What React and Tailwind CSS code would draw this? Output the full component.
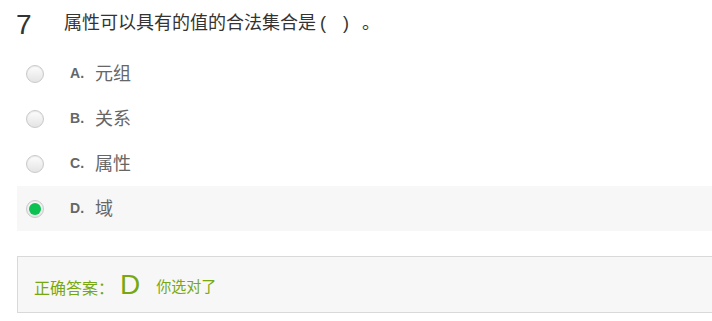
const options = [
  { key: "A", text: "元组" },
  { key: "B", text: "关系" },
  { key: "C", text: "属性" },
  { key: "D", text: "域", checked: true },
]

const Radio = ({ checked }) => (
  <span className="w-[18px] h-[18px] rounded-full border border-[#c9c9c9] bg-gradient-to-b from-[#fdfdfd] to-[#e4e4e4] flex items-center justify-center shadow-[inset_0_1px_1px_rgba(0,0,0,0.08)]">
    {checked && <span className="w-[12px] h-[12px] rounded-full bg-[#0bc152]" />}
  </span>
)

export default function App() {
  return (
    <div className="w-[712px] h-[321px] bg-white overflow-hidden pl-[17px] font-['Noto_Sans_CJK_SC','Noto_Sans',sans-serif]">

      {/* Question */}
      <div className="h-[51px] flex items-center">
        <span className="w-[48px] -ml-[1px] pb-[2px] text-[28px] leading-none text-[#333] font-['Liberation_Sans',Arial,sans-serif]">7</span>
        <span className="text-[18px] text-[#333] pb-[6px]">
          属性可以具有的值的合法集合是
          <span className="ml-[4px] font-['Liberation_Sans',Arial,sans-serif]">(</span>
          <span className="ml-[17px] font-['Liberation_Sans',Arial,sans-serif]">)</span>
          <span className="ml-[13px]">。</span>
        </span>
      </div>

      {/* Options */}
      <ul className="w-[720px]">
        {options.map((o) => (
          <li key={o.key} className={`h-[45px] flex items-center pl-[9px] ${o.checked ? "bg-[#f7f7f7]" : ""}`}>
            <Radio checked={o.checked} />
            <span className="ml-[26px] w-[25px] text-[14px] font-bold text-[#666] font-['Liberation_Sans',Arial,sans-serif]">{o.key}.</span>
            <span className="text-[18px] text-[#666] pb-[2px]">{o.text}</span>
          </li>
        ))}
      </ul>

      {/* Answer */}
      <div className="mt-[25px] w-[720px] h-[57px] border border-[#d9d9d9] bg-[#f7f7f7] flex items-center pl-[16px] pt-[4px] text-[#77a80f]">
        <span className="text-[16px]">正确答案：</span>
        <span className="ml-[6px] mb-[4px] text-[28px] leading-none font-['Liberation_Sans',Arial,sans-serif]">D</span>
        <span className="ml-[16px] text-[15px]">你选对了</span>
      </div>

    </div>
  )
}
